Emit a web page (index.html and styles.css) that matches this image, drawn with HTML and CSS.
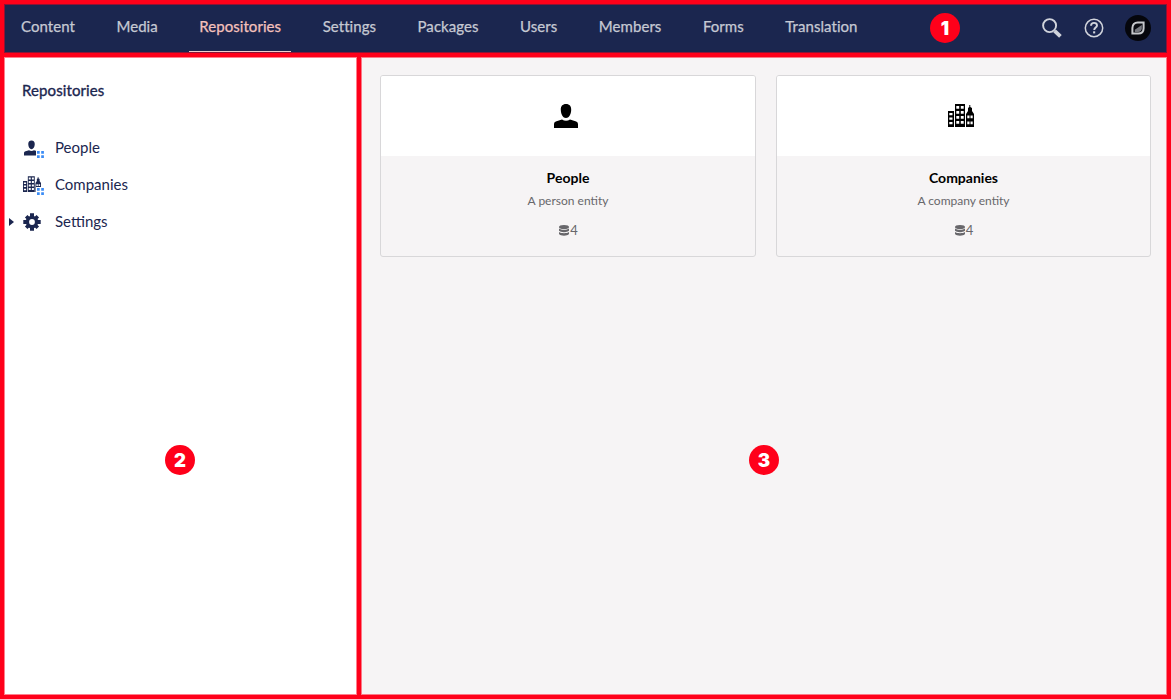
FILE: index.html
```html
<!DOCTYPE html>
<html lang="en">
<head>
<meta charset="utf-8">
<title>Repositories</title>
<link rel="stylesheet" href="styles.css">
</head>
<body>
<svg class="defs" aria-hidden="true">
  <symbol id="person" viewBox="0 0 24 24"><path d="M12 0C8.500 0 6.600 2.300 6.800 6c.2 4.500 2.300 8 5.200 8s5-3.500 5.200-8C17.400 2.300 15.500 0 12 0zM0 24v-3.500c0-2 .8-2.800 2.500-3.200L8 15.500c2.500 1.600 5.500 1.600 8 0l5.500 1.800c1.700.4 2.500 1.200 2.500 3.200V24z"/></symbol>
  <symbol id="buildings" viewBox="0 0 26 24"><path fill-rule="evenodd" d="M0 7h6v16H0zM1.300 9v2.200h3.200V9zm0 4.500v2.200h3.200v-2.200zm0 4.500v2.200h3.200V18zM7 0h10v23H7zM8.300 2v2.800h2.900V2zm4.500 0v2.800h2.900V2zM8.300 7v2.800h2.900V7zm4.500 0v2.800h2.900V7zM8.300 12v2.800h2.900V12zm4.500 0v2.800h2.900V12zM8.300 17v2.800h2.900V17zm4.500 0v2.800h2.900V17zM18 23V10l2-3V4l1.300-1V1h1v2L24 4v3l2 3v13zM19.300 11.500v2.700h2.200v-2.700zm3.200 0v2.700h2.200v-2.700zm-3.200 6v2.700h2.200v-2.700zm3.200 0v2.700h2.200v-2.700z"/></symbol>
  <symbol id="stack" viewBox="0 0 10 11"><ellipse cx="5" cy="2" rx="5" ry="2"/><path d="M0 3.400c2 1.700 8 1.700 10 0v2.400c-1.500 1.800-8.500 1.800-10 0zM0 7c2 1.600 8 1.600 10 0v2c-1.500 2.300-8.500 2.300-10 0z"/></symbol>
  <symbol id="dots" viewBox="0 0 7 7"><path d="M0 0h2.700v2.700H0zM4.200 0h2.700v2.700H4.200zM0 4.200h2.700v2.700H0zM4.200 4.200h2.700v2.700H4.200z"/></symbol>
</svg>
<div class="app">
  <header class="topbar">
    <nav class="sections">
      <a class="section">Content</a>
      <a class="section">Media</a>
      <a class="section active">Repositories</a>
      <a class="section">Settings</a>
      <a class="section">Packages</a>
      <a class="section">Users</a>
      <a class="section">Members</a>
      <a class="section">Forms</a>
      <a class="section">Translation</a>
    </nav>
    <div class="tools">
      <svg class="tool-search" viewBox="0 0 20 20"><circle cx="7.600" cy="7.600" r="6.500" fill="none" stroke="currentColor" stroke-width="1.900"/><path d="M12.600 12.800l5.800 5.600" stroke="currentColor" stroke-width="3.800"/></svg>
      <svg class="tool-help" viewBox="0 0 20 20"><circle cx="10" cy="10" r="8.700" fill="none" stroke="currentColor" stroke-width="1.500"/><path d="M7 7.700c.1-1.900 1.300-2.800 3-2.800s3 .9 3 2.500c0 2-2.800 2.200-2.800 4.500" fill="none" stroke="currentColor" stroke-width="1.900"/><path d="M9.100 13.300h2.100v2.100H9.100z" fill="currentColor"/></svg>
      <svg class="avatar" viewBox="0 0 26 26"><circle cx="13" cy="13" r="13" fill="#05060c"/><path d="M7.400 18.600v-5.600c0-3.500 2-5.400 5.400-5.400h5.800v5.600c0 3.500-2 5.400-5.400 5.400z" fill="#090a10" stroke="#c6c8cc" stroke-width="2"/><path d="M9.800 17v-2.300l7-4.700v3.200c0 2.400-1.500 3.800-3.800 3.800z" fill="#777980"/></svg>
    </div>
  </header>
  <aside class="sidebar">
    <h1 class="tree-title">Repositories</h1>
    <ul class="tree">
      <li class="node"><span class="node-icon"><svg class="i-person"><use href="#person"/></svg><svg class="i-dots"><use href="#dots"/></svg></span>People</li>
      <li class="node"><span class="node-icon"><svg class="i-buildings"><use href="#buildings"/></svg><svg class="i-dots"><use href="#dots"/></svg></span>Companies</li>
      <li class="node"><svg class="i-caret" viewBox="0 0 5 8"><path d="M0 0l5 4-5 4z"/></svg><span class="node-icon"><svg class="i-gear" viewBox="-9 -9 18 18"><path d="M-2-8.700h4v17.400h-4zM-8.700-2h17.400v4H-8.700z"/><path transform="rotate(45)" d="M-1.800-8.200h3.600v16.400h-3.600zM-8.200-1.800h16.400v3.600h-16.400z"/><circle r="6.300"/><circle class="hole" r="2.900"/></svg></span>Settings</li>
    </ul>
  </aside>
  <main class="content">
    <article class="card">
      <div class="card-top"><svg class="c-person"><use href="#person"/></svg></div>
      <div class="card-body"><h2>People</h2><p>A person entity</p><div class="count"><svg><use href="#stack"/></svg>4</div></div>
    </article>
    <article class="card">
      <div class="card-top"><svg class="c-buildings"><use href="#buildings"/></svg></div>
      <div class="card-body"><h2>Companies</h2><p>A company entity</p><div class="count"><svg><use href="#stack"/></svg>4</div></div>
    </article>
  </main>
  <span class="marker m1">1</span>
  <span class="marker m2">2</span>
  <span class="marker m3">3</span>
</div>
</body>
</html>
```
FILE: styles.css
```css
* { box-sizing: border-box; }
body { margin: 0; font-family: Lato, sans-serif; font-size: 15px; color: #1b264f; }
.defs { display: none; }
.app {
  position: relative;
  width: 1171px; height: 699px;
  display: grid;
  grid-template: 49px 638px / 353px 806px;
  gap: 4px;
  padding: 4px;
  background: #ff001a;
}
.topbar, .sidebar, .content { box-shadow: inset 0 0 0 1px rgba(255, 0, 26, .5); }
.topbar { grid-column: 1 / 3; background: #1b264f; display: flex; justify-content: space-between; }
.sections { display: flex; gap: 21.500px; padding-left: 7px; }
.section { position: relative; padding: 13px 10px 0; line-height: 18px; color: #c6c9d3; letter-spacing: .055px; -webkit-text-stroke: .25px; }
.active { color: #f5c1bc; }
.active::after { content: ""; position: absolute; left: 0; right: 0; bottom: 1px; height: 1px; background: #f3cfcc; }
.tools { display: flex; align-items: center; color: #d1d4dc; padding: 0 16px 1px 0; }
.tool-search { width: 20px; height: 20px; margin-right: 22px; }
.tool-help { width: 20px; height: 20px; margin-right: 21px; }
.avatar { width: 26px; height: 26px; }
.sidebar { background: #fff; }
.tree-title { margin: 23px 0 0 18px; font-size: 15px; line-height: 20px; font-weight: 400; letter-spacing: .1px; -webkit-text-stroke: .35px; }
.tree { list-style: none; margin: 28px 0 0; padding: 0; }
.node { position: relative; display: flex; align-items: center; height: 37px; padding-left: 19px; }
.node-icon { position: relative; top: 1px; width: 32px; height: 20px; display: flex; align-items: center; }
.node svg { fill: #1b264f; }
.i-person { width: 15px; height: 16px; margin-left: 1px; }
.i-buildings { width: 18px; height: 17px; }
.i-gear { width: 18px; height: 18px; }
.i-gear .hole { fill: #fff; }
.node .i-dots { position: absolute; left: 13px; top: 12px; width: 9px; height: 9px; padding: 1px; background: #fff; fill: #3b8cf5; }
.i-caret { position: absolute; left: 5px; top: 16px; width: 5px; height: 8px; }
.content { background: #f6f4f5; display: grid; grid-template-columns: 376px 375px; column-gap: 20px; align-items: start; padding: 18px 0 0 19px; }
.card { height: 182px; border: 1px solid #d8d7d9; border-radius: 3px; overflow: hidden; }
.card-top { height: 80px; background: #fff; display: flex; justify-content: center; align-items: center; padding-right: 5px; }
.c-person { width: 24px; height: 24px; }
.c-buildings { width: 26px; height: 24px; }
.card-body { text-align: center; color: #68676b; font-size: 12px; }
.card h2 { margin: 13px 0 0; font-size: 14px; line-height: 18px; font-weight: 700; color: #000; }
.card p { margin: 6px 0 0; line-height: 16px; }
.count { display: flex; justify-content: center; align-items: center; gap: 1px; margin-top: 12px; padding-left: 1px; line-height: 18px; font-size: 13px; }
.count svg { width: 10px; height: 11px; fill: #68676b; }
.marker { position: absolute; width: 30px; height: 30px; border-radius: 50%; background: #ff001a; color: #fff; font: 900 18.500px/31px Inter, sans-serif; text-align: center; }
.m1 { left: 930px; top: 13px; }
.m2 { left: 165px; top: 445px; }
.m3 { left: 749px; top: 445px; }
```
